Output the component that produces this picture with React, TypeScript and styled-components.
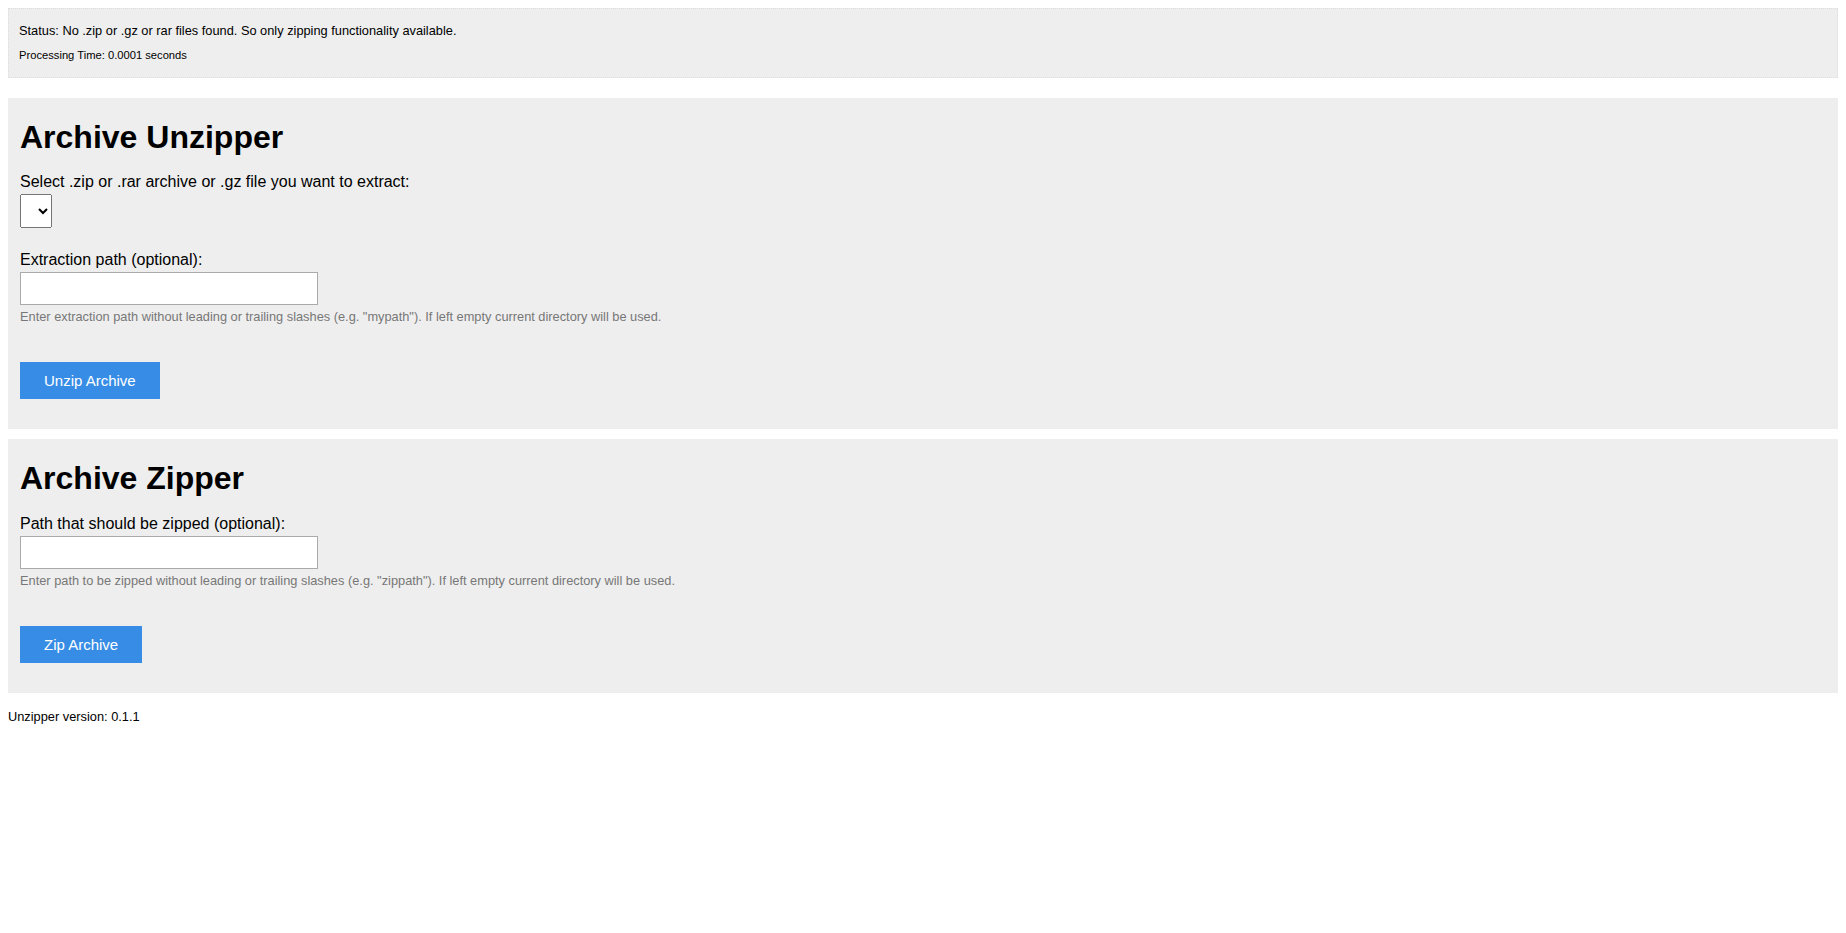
import styled, { createGlobalStyle } from "styled-components";

const GlobalStyle = createGlobalStyle`
  body {
    margin: 8px;
    font-family: "Liberation Sans", Arial, sans-serif;
    line-height: 150%;
    color: #000;
    background: #fff;
  }
`;

const Status = styled.p`
  margin: 0 0 20px 0;
  padding: 10px;
  font-size: 80%;
  background: #eee;
  border: 1px dotted #ddd;
`;

const Small = styled.span`
  font-size: 0.7rem;
  font-weight: normal;
`;

const Panel = styled.fieldset`
  border: 0;
  background-color: #eee;
  margin: 10px 0;
  padding: 0.35em 0.75em 0.625em;
  min-width: 0;
`;

const Title = styled.h1`
  font-size: 2em;
  margin: 0.67em 0;
  font-weight: bold;
`;

const Label = styled.label`
  display: block;
  margin-top: 20px;
`;

const Select = styled.select`
  padding: 5px;
  font-size: 110%;
  font-family: "Liberation Sans", Arial, sans-serif;
`;

const Field = styled.input`
  border: 1px solid #aaa;
  padding: 8px;
  width: 280px;
  background: #fff;
  font-family: "Liberation Sans", Arial, sans-serif;
  font-size: 13.333px;
`;

const Info = styled.p`
  margin-top: 0;
  margin-bottom: 1em;
  font-size: 80%;
  color: #777;
`;

const Submit = styled.input`
  background-color: #378de5;
  border: 0;
  color: #ffffff;
  font-family: "Liberation Sans", Arial, sans-serif;
  font-size: 15px;
  padding: 10px 24px;
  margin: 20px 0;
  text-decoration: none;
  cursor: pointer;

  &:hover {
    background-color: #2c6db2;
  }
`;

const Version = styled.p`
  font-size: 80%;
`;

export default function App() {
  return (
    <>
      <GlobalStyle />
      <Status>
        Status: No .zip or .gz or rar files found. So only zipping functionality
        available.
        <br />
        <Small>Processing Time: 0.0001 seconds</Small>
      </Status>
      <form action="" method="POST" onSubmit={(e) => e.preventDefault()}>
        <Panel>
          <Title>Archive Unzipper</Title>
          <Label htmlFor="zipfile">
            Select .zip or .rar archive or .gz file you want to extract:
          </Label>
          <Select name="zipfile" id="zipfile" size={1}></Select>
          <Label htmlFor="extpath">Extraction path (optional):</Label>
          <Field type="text" name="extpath" id="extpath" />
          <Info>
            Enter extraction path without leading or trailing slashes (e.g.
            "mypath"). If left empty current directory will be used.
          </Info>
          <Submit type="submit" name="dounzip" value="Unzip Archive" />
        </Panel>

        <Panel>
          <Title>Archive Zipper</Title>
          <Label htmlFor="zippath">Path that should be zipped (optional):</Label>
          <Field type="text" name="zippath" id="zippath" />
          <Info>
            Enter path to be zipped without leading or trailing slashes (e.g.
            "zippath"). If left empty current directory will be used.
          </Info>
          <Submit type="submit" name="dozip" value="Zip Archive" />
        </Panel>
      </form>
      <Version>Unzipper version: 0.1.1</Version>
    </>
  );
}
